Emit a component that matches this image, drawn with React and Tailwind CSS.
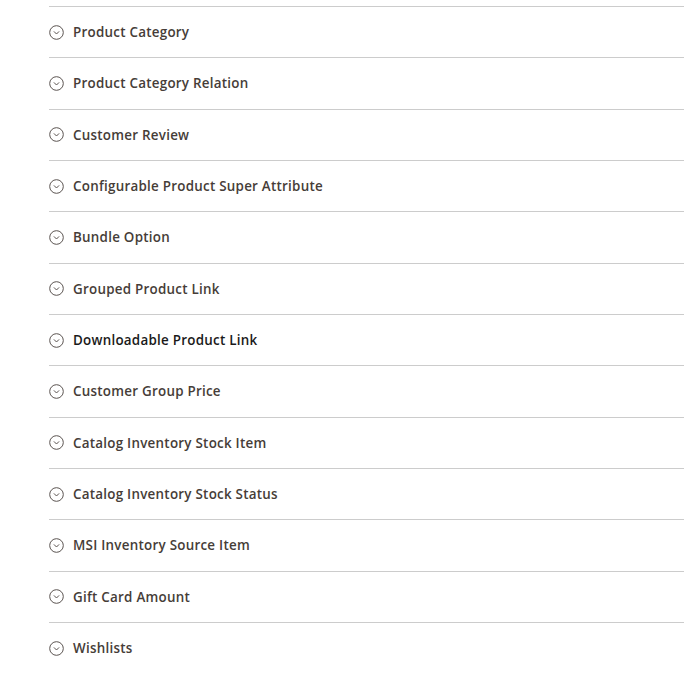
import React from 'react'

const items = [
  'Product Category',
  'Product Category Relation',
  'Customer Review',
  'Configurable Product Super Attribute',
  'Bundle Option',
  'Grouped Product Link',
  'Downloadable Product Link',
  'Customer Group Price',
  'Catalog Inventory Stock Item',
  'Catalog Inventory Stock Status',
  'MSI Inventory Source Item',
  'Gift Card Amount',
  'Wishlists',
]

function ChevronCircle() {
  return (
    <svg width="15" height="15" viewBox="0 0 15 15" fill="none" stroke="#5a5350" strokeWidth="1">
      <circle cx="7.5" cy="7.5" r="6.8" />
      <polyline points="4.9 6.4 7.5 9 10.1 6.4" />
    </svg>
  )
}

export default function App() {
  return (
    <div className="bg-white min-h-[673px] pt-[6px] pl-[49px] pr-[1px]" style={{ fontFamily: '"Open Sans", sans-serif' }}>
      {items.map((label, i) => (
        <div
          key={label}
          className="flex items-center h-[51.33px] border-t border-[#cccccc] gap-[9px]"
        >
          <ChevronCircle />
          <span
            className={
              'text-[13.4px] font-semibold tracking-[0.25px] ' +
              (i === 6 ? 'text-[#1a1a1a]' : 'text-[#463d38]')
            }
          >
            {label}
          </span>
        </div>
      ))}
    </div>
  )
}
